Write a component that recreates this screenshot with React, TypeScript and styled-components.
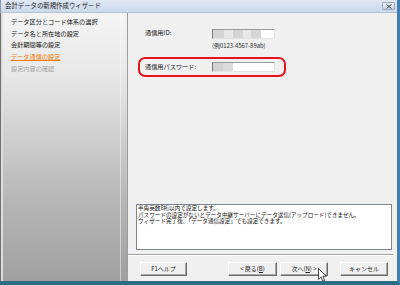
import React from "react";
import styled, { createGlobalStyle } from "styled-components";

const Global = createGlobalStyle`
  html, body { margin: 0; padding: 0; background: #ffffff; }
  body { font-family: "Noto Sans CJK JP", "Noto Sans", sans-serif; }
  * { box-sizing: border-box; }
`;

const Window = styled.div`
  position: relative;
  width: 400px;
  height: 285px;
  display: flex;
  flex-direction: column;
  background: #f0f0f0;
  border-right: 3px solid #3f7fb3;
  border-bottom: 4px solid #2a6d84;
  overflow: hidden;
`;

const TitleBar = styled.div`
  height: 13px;
  flex: none;
  display: flex;
  align-items: center;
  justify-content: space-between;
  padding: 0 2px 0 4px;
  background: linear-gradient(#dfe8f3, #cad8e9);
  border-bottom: 1px solid #b3c2d4;
  border-left: 1px solid #8796a8;
  font-size: 6.4px;
  line-height: 1;
  color: #1c1c1c;
  white-space: nowrap;
`;

const CloseButton = styled.div`
  width: 13px;
  height: 8px;
  display: flex;
  align-items: center;
  justify-content: center;
  border: 1px solid #9aa8ba;
  border-radius: 1px;
  background: linear-gradient(#edf2f8, #c9d5e4);
`;

const Body = styled.div`
  flex: 1;
  display: flex;
  min-height: 0;
`;

const StepsPanel = styled.div`
  width: 128px;
  flex: none;
  padding: 3px 0 0 10px;
  border-left: 1px solid #6f6f6f;
  border-right: 1px solid #9c9c9c;
  box-shadow: inset 2px 0 0 #dedede;
  background:
    linear-gradient(
      to right,
      transparent 0,
      transparent calc(100% - 7px),
      rgba(255, 255, 255, 0.45) calc(100% - 7px),
      rgba(255, 255, 255, 0.45) calc(100% - 6px),
      transparent calc(100% - 6px)
    ),
    linear-gradient(180deg, #f4f4f4 0%, #e9e9e9 22%, #d0d0d0 45%, #b6b6b6 70%, #a0a0a0 100%);
`;

type StepState = "done" | "current" | "todo";

const Step = styled.div<{ $state: StepState }>`
  height: 11.7px;
  line-height: 11.7px;
  font-size: 6.2px;
  white-space: nowrap;
  color: ${(p) => (p.$state === "current" ? "#f27a00" : p.$state === "todo" ? "#a4a4a4" : "#111111")};
  text-decoration: ${(p) => (p.$state === "current" ? "underline" : "none")};
`;

const RightPane = styled.div`
  flex: 1;
  display: flex;
  flex-direction: column;
  border-right: 4px solid #f4efe7;
`;

const FormArea = styled.div`
  padding: 15px 0 0 10px;
  display: flex;
  flex-direction: column;
`;

const FieldRow = styled.div<{ $indent: number }>`
  display: grid;
  grid-template-columns: 67px 63px;
  align-items: center;
  height: 11px;
  margin-left: ${(p) => p.$indent}px;
`;

const Label = styled.span`
  font-size: 6.2px;
  line-height: 1;
  color: #1a1a1a;
  white-space: nowrap;
`;

const TextBox = styled.div`
  height: 10px;
  display: flex;
  background: #ffffff;
  border-top: 1px solid #9a9a9a;
  border-left: 1px solid #7b7b7b;
  border-right: 1px solid #e2e2e2;
  border-bottom: 1px solid #e2e2e2;
  overflow: hidden;
`;

const Mask = styled.span<{ $w: number; $shade: string }>`
  width: ${(p) => p.$w}px;
  flex: none;
  height: 100%;
  background: ${(p) => p.$shade};
`;

const Example = styled.div`
  margin: 3px 0 0 74px;
  height: 7px;
  font-size: 5.9px;
  line-height: 7px;
  color: #2a2a2a;
  white-space: nowrap;
`;

const Highlight = styled.div`
  margin-top: 8px;
  width: 148px;
  height: 20px;
  display: flex;
  align-items: center;
  border: 2px solid #e5131b;
  border-radius: 7px;
`;

const Spacer = styled.div`
  flex: 1;
`;

const Description = styled.div`
  height: 46px;
  margin: 0 1px 0 8px;
  padding: 0 0 0 1px;
  background: #ffffff;
  border: 1px solid #7f8590;
  font-size: 5.6px;
  line-height: 6.6px;
  color: #111111;
  white-space: nowrap;
`;

const DescLine = styled.div`
  height: 6.6px;
`;

const Separator = styled.div`
  margin-top: 4px;
  height: 2px;
  border-top: 1px solid #a0a0a0;
  border-bottom: 1px solid #ffffff;
`;

const ButtonRow = styled.div`
  position: relative;
  display: flex;
  align-items: center;
  padding: 6px 5px 5px 12px;
`;

const Button = styled.div<{ $w: number; $gap?: number; $push?: boolean }>`
  width: ${(p) => p.$w}px;
  height: 14px;
  margin-left: ${(p) => (p.$push ? "auto" : `${p.$gap ?? 0}px`)};
  display: flex;
  align-items: center;
  justify-content: center;
  font-size: 6px;
  line-height: 1;
  color: #1a1a1a;
  white-space: nowrap;
  background: #f0f0f0;
  border-top: 1px solid #ffffff;
  border-left: 1px solid #ffffff;
  border-right: 1px solid #6a6a6a;
  border-bottom: 1px solid #6a6a6a;
  box-shadow: inset -1px -1px 0 #a8a8a8;
`;

const Key = styled.span`
  text-decoration: underline;
`;

const Cursor = styled.svg`
  position: absolute;
  left: 318px;
  top: 268px;
`;

const steps: { text: string; state: StepState }[] = [
  { text: "データ区分とコード体系の選択", state: "done" },
  { text: "データ名と所在地の設定", state: "done" },
  { text: "会計期間等の設定", state: "done" },
  { text: "データ通信の設定", state: "current" },
  { text: "設定内容の確認", state: "todo" },
];

const descLines = [
  "半角英数8桁以内で設定します。",
  "パスワードの設定がないとデータ中継サーバーにデータ送信(アップロード)できません。",
  "ウィザード完了後、「データ通信設定」でも設定できます。",
];

export default function App() {
  return (
    <>
      <Global />
      <Window>
        <TitleBar>
          <span>会計データの新規作成ウィザード</span>
          <CloseButton>
            <svg width="6" height="5" viewBox="0 0 6 5">
              <path d="M0.5 0.5 L5.5 4.5 M5.5 0.5 L0.5 4.5" stroke="#3a4656" strokeWidth="1" />
            </svg>
          </CloseButton>
        </TitleBar>
        <Body>
          <StepsPanel>
            {steps.map((s) => (
              <Step key={s.text} $state={s.state}>
                {s.text}
              </Step>
            ))}
          </StepsPanel>
          <RightPane>
            <FormArea>
              <FieldRow $indent={7}>
                <Label>通信用ID:</Label>
                <TextBox>
                  <Mask $w={11} $shade="#d4d4d4" />
                  <Mask $w={9} $shade="#e8e8e8" />
                  <Mask $w={10} $shade="#d4d4d4" />
                  <Mask $w={8} $shade="#e8e8e8" />
                  <Mask $w={10} $shade="#d6d6d6" />
                </TextBox>
              </FieldRow>
              <Example>(例0123-4567-89ab)</Example>
              <Highlight>
                <FieldRow $indent={5}>
                  <Label>通信用パスワード:</Label>
                  <TextBox>
                    <Mask $w={10} $shade="#d2d2d2" />
                    <Mask $w={10} $shade="#dcdcdc" />
                  </TextBox>
                </FieldRow>
              </Highlight>
            </FormArea>
            <Spacer />
            <Description>
              {descLines.map((l) => (
                <DescLine key={l}>{l}</DescLine>
              ))}
            </Description>
            <Separator />
            <ButtonRow>
              <Button $w={47}>F1ヘルプ</Button>
              <Button $w={49} $push>
                &lt; 戻る(<Key>B</Key>)
              </Button>
              <Button $w={48} $gap={3}>
                次へ(<Key>N</Key>) &gt;
              </Button>
              <Button $w={48} $gap={12}>
                キャンセル
              </Button>
            </ButtonRow>
          </RightPane>
        </Body>
        <Cursor width="9" height="14" viewBox="0 0 12 19">
          <path
            d="M0.5 0.5 L0.5 15.5 L4 12 L6.5 18 L9 17 L6.5 11.2 L11.2 11.2 Z"
            fill="#ffffff"
            stroke="#000000"
            strokeWidth="1"
            strokeLinejoin="round"
          />
        </Cursor>
      </Window>
    </>
  );
}
